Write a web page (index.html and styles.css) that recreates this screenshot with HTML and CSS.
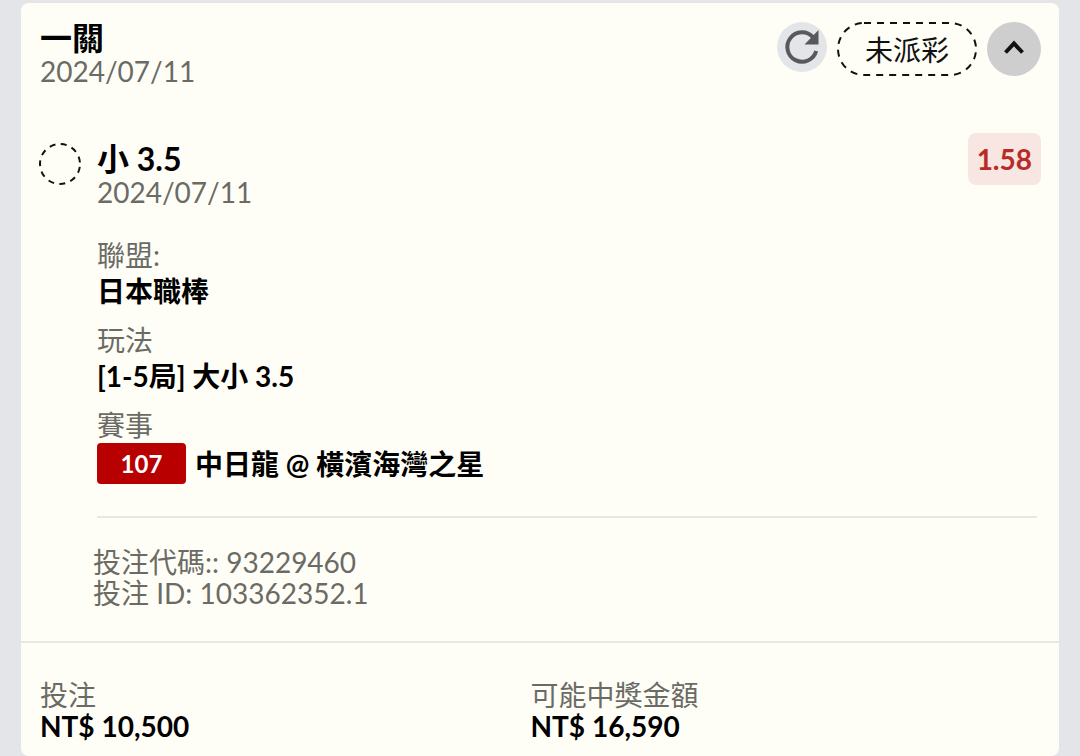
FILE: index.html
```html
<!DOCTYPE html>
<html lang="zh-Hant">

<head>
  <meta charset="UTF-8">
  <meta name="viewport" content="width=device-width, initial-scale=1.0">
  <title>一關</title>
  <link rel="stylesheet" href="styles.css">
</head>

<body>
  <main class="ticket">
    <header class="ticketHeader">
      <div class="ticketInfo">
        <h1 class="title">一關</h1>
        <p class="date">2024/07/11</p>
      </div>
      <div class="actions">
        <button type="button" class="refresh" aria-label="重新整理">
          <svg viewBox="0 0 50 50" width="50" height="50" fill="none">
            <path d="M36 15.2A14.7 14.7 0 1 0 39.2 29" stroke="#58595b" stroke-width="4"/>
            <path d="M41.5 8V22.5H27.5Z" fill="#58595b"/>
          </svg>
        </button>
        <span class="status">
          <svg class="statusBorder" width="100%" height="100%" fill="none" aria-hidden="true">
            <rect class="statusLine" x="1" y="1" rx="26" ry="26"/>
          </svg>
          未派彩
        </span>
        <button type="button" class="toggle" aria-label="收合">
          <svg viewBox="0 0 54 54" width="54" height="54" fill="none">
            <path d="M18.5 30.5L27 21.5L35.5 30.5" stroke="#111" stroke-width="4"/>
          </svg>
        </button>
      </div>
    </header>

    <section class="bet">
      <svg class="marker" viewBox="0 0 42 42" width="42" height="42" fill="none" aria-hidden="true">
        <circle cx="21" cy="21" r="20" stroke="#111" stroke-width="2" stroke-dasharray="6 5.424" stroke-dashoffset="-3"/>
      </svg>
      <div class="betBody">
        <div class="betTop">
          <div class="betName">
            <h2 class="title">小 3.5</h2>
            <p class="date">2024/07/11</p>
          </div>
          <span class="odds">1.58</span>
        </div>

        <dl class="details">
          <div>
            <dt>聯盟:</dt>
            <dd>日本職棒</dd>
          </div>
          <div>
            <dt>玩法</dt>
            <dd>[1-5局] 大小 3.5</dd>
          </div>
          <div>
            <dt>賽事</dt>
            <dd class="match"><span class="matchNo">107</span>中日龍 @ 橫濱海灣之星</dd>
          </div>
        </dl>

        <div class="codes">
          <p>投注代碼:: 93229460</p>
          <p>投注 ID: 103362352.1</p>
        </div>
      </div>
    </section>

    <footer class="totals">
      <div>
        <p class="totalLabel">投注</p>
        <p class="totalValue">NT$ 10,500</p>
      </div>
      <div>
        <p class="totalLabel">可能中獎金額</p>
        <p class="totalValue">NT$ 16,590</p>
      </div>
    </footer>
  </main>
</body>

</html>
```
FILE: styles.css
```css
* {
  box-sizing: border-box;
}

body {
  margin: 0;
  padding: 3px 21px 0;
  background-color: #e4e5e8;
  font-family: Lato, "Noto Sans CJK TC", sans-serif;
  font-size: 28px;
  line-height: 31px;
  color: #6b6b66;
}

h1,
h2,
p,
dl,
dd {
  margin: 0;
}

button {
  border: none;
  padding: 0;
  border-radius: 50%;
  cursor: pointer;
}

svg {
  display: block;
}

.ticket {
  background-color: #fffef6;
  border-radius: 8px;
}

.ticketHeader {
  display: flex;
  justify-content: space-between;
  padding: 17px 18px 0 19px;
}

.title {
  color: #000;
  font-size: 32px;
  font-weight: 700;
  line-height: 36px;
}

.actions {
  display: flex;
  align-items: flex-start;
  gap: 10px;
  padding-top: 2px;
}

.refresh {
  width: 50px;
  height: 50px;
  background-color: #e4e5e8;
}

.status {
  position: relative;
  padding: 2px 28px 0;
  color: #111;
  line-height: 52px;
}

/* dashed pill outline, drawn over the label box */
.statusBorder {
  position: absolute;
  top: 0;
  left: 0;
}

.statusLine {
  width: calc(100% - 2px);
  height: calc(100% - 2px);
  stroke: #111;
  stroke-width: 2px;
  stroke-dasharray: 7 6;
}

.toggle {
  width: 54px;
  height: 54px;
  background-color: #cecece;
}

.bet {
  display: flex;
  gap: 16px;
  padding: 46px 18px 32px;
}

.marker {
  flex: none;
  margin-top: 10px;
}

.betBody {
  flex: 1;
}

.betTop {
  display: flex;
  justify-content: space-between;
  align-items: flex-start;
}

.betName {
  padding-top: 8px;
}

.odds {
  padding: 0 9px;
  border-radius: 8px;
  background-color: #f7e6e1;
  color: #b92b27;
  font-weight: 700;
  line-height: 52px;
}

.details {
  display: flex;
  flex-direction: column;
  gap: 13px;
  margin-right: 4px;
  padding: 29px 0 32px;
  border-bottom: 2px solid #e9e7e0;
  line-height: 36px;
}

.details dd {
  color: #000;
  font-weight: 700;
}

.details .match {
  display: flex;
  align-items: center;
  gap: 9px;
}

.matchNo {
  width: 89px;
  border-radius: 4px;
  background-color: #b80000;
  color: #fff;
  font-size: 24px;
  line-height: 41px;
  text-align: center;
}

.codes {
  margin-left: -4px;
  padding-top: 29px;
}

.totals {
  display: grid;
  grid-template-columns: 49% 1fr;
  padding: 37px 18px 14px 19px;
  border-top: 2px solid #e9e7e0;
}

.totalValue {
  color: #000;
  font-weight: 700;
}
```
